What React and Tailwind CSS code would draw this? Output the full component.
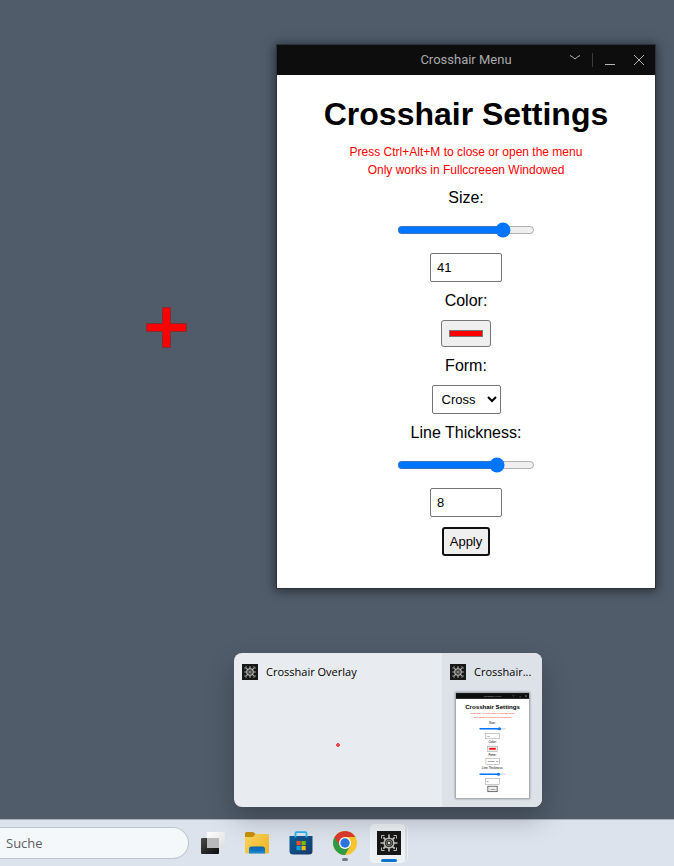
import React, { useState } from "react";

function Gear({ className }) {
  return (
    <svg viewBox="0 0 24 24" className={className} aria-hidden="true">
      <rect width="24" height="24" fill="#171717" />
      <g stroke="#bdbdb8" fill="none">
        <path d="M4.500 7.500v-3h3M16.500 4.500h3v3M19.500 16.500v3h-3M7.500 19.500h-3v-3" strokeWidth="1" />
        <path d="M12 3.500v4M12 16.500v4M3.500 12h4M16.500 12h4" strokeWidth="1.600" />
        <path d="M6.300 6.300l2.600 2.600M17.700 6.300l-2.600 2.600M6.300 17.700l2.600-2.600M17.700 17.700l-2.600-2.600" strokeWidth="1.800" />
        <circle cx="12" cy="12" r="4.800" strokeWidth="1.600" />
      </g>
      <circle cx="12" cy="12" r="3" fill="#3a3a3a" stroke="#8a8a86" strokeWidth="0.800" />
      <circle cx="12" cy="12" r="1.200" fill="#d8d8d4" />
    </svg>
  );
}

function TitleBar() {
  return (
    <header className="relative flex h-[30px] items-center justify-center bg-[#0d0d0d] font-['Roboto',sans-serif] text-[13px] text-[#a9a9a9]">
      <span>Crosshair Menu</span>
      <div className="absolute inset-y-0 right-0 flex items-center">
        <button type="button" aria-label="Collapse" className="flex h-[30px] w-[34px] items-center justify-center">
          <svg width="12" height="30" viewBox="0 0 12 30" fill="none" stroke="#b5b5b5" strokeWidth="1">
            <path d="M1 10.500Q3.500 11.500 6 14Q8.500 11.500 11 10.500" />
          </svg>
        </button>
        <span className="h-[14px] w-px bg-[#3a3a3a]" />
        <button type="button" aria-label="Minimize" className="flex h-[30px] w-[34px] items-center justify-center">
          <svg width="10" height="30" viewBox="0 0 10 30" fill="#b5b5b5">
            <rect y="19" width="10" height="1" />
          </svg>
        </button>
        <button type="button" aria-label="Close" className="flex h-[30px] w-[28px] items-center justify-start">
          <svg width="12" height="12" viewBox="0 0 12 12" stroke="#b5b5b5" strokeWidth="1" className="ml-[6px]">
            <path d="M1 1l10 10M11 1L1 11" />
          </svg>
        </button>
      </div>
    </header>
  );
}

function SettingsWindow({ settings, change }) {
  return (
    <section className="absolute right-[19px] top-[45px] w-[378px] bg-white shadow-[0_0_0_1px_#2b323b,0_1px_10px_2px_rgba(0,0,0,0.5)]">
      <TitleBar />
      <form
        className="flex flex-col items-center gap-[10px] pb-8 pt-[21px] text-center font-['Liberation_Sans',Arial,sans-serif] text-base leading-[18px] text-black"
        onSubmit={(e) => e.preventDefault()}
      >
        <h1 className="text-[32px] font-bold leading-[37px]">Crosshair Settings</h1>
        <p className="text-xs leading-[18px] text-[#ff0000]">
          Press Ctrl+Alt+M to close or open the menu
          <br />
          Only works in Fullccreeen Windowed
        </p>
        <label htmlFor="size">Size:</label>
        <input id="size" type="range" min="5" max="50" value={settings.size} onChange={change("size")} className="my-[5px] h-4 w-[138px]" />
        <input type="number" aria-label="Size value" value={settings.size} onChange={change("size")} className="h-[29px] w-[72px] rounded-[2px] border border-[#767676] bg-white p-[6px] text-[13px]" />
        <label htmlFor="color">Color:</label>
        <input id="color" type="color" value={settings.color} onChange={change("color")} className="h-[27px] w-[50px] rounded-[3px] border border-[#767676] bg-[#efefef] p-[5px]" />
        <label htmlFor="form">Form:</label>
        <select id="form" value={settings.form} onChange={change("form")} className="h-[29px] w-[69px] rounded-[2px] border border-[#767676] bg-white p-[5px] text-[13px]">
          <option>Cross</option>
        </select>
        <label htmlFor="thickness">Line Thickness:</label>
        <input id="thickness" type="range" min="2" max="10" value={settings.thickness} onChange={change("thickness")} className="my-[5px] h-4 w-[138px]" />
        <input type="number" aria-label="Line thickness value" value={settings.thickness} onChange={change("thickness")} className="h-[29px] w-[72px] rounded-[2px] border border-[#767676] bg-white p-[6px] text-[13px]" />
        <button type="submit" className="h-[29px] w-12 rounded-[3px] border-2 border-[#101010] bg-[#efefef] text-[13px]">
          Apply
        </button>
      </form>
    </section>
  );
}

function Thumbnail() {
  return (
    <svg viewBox="0 0 378 543" className="h-[105px] w-[73px] bg-white shadow-[0_0_2px_1px_rgba(0,0,0,0.35)]" fontFamily="Liberation Sans, Arial, sans-serif" textAnchor="middle" fontSize="16">
      <rect width="378" height="30" fill="#0d0d0d" />
      <text x="189" y="20" fontSize="13" fill="#a9a9a9">Crosshair Menu</text>
      <path d="M292 11l6 5 6-5M328 20h10M357 10l11 11M368 10l-11 11" fill="none" stroke="#b5b5b5" strokeWidth="2" />
      <text x="189" y="80" fontSize="32" fontWeight="bold">Crosshair Settings</text>
      <g fontSize="12" fill="#ff0000">
        <text x="189" y="111">Press Ctrl+Alt+M to close or open the menu</text>
        <text x="189" y="129">Only works in Fullccreeen Windowed</text>
      </g>
      <text x="189" y="158">Size:</text>
      <text x="189" y="261">Color:</text>
      <text x="189" y="326">Form:</text>
      <text x="189" y="393">Line Thickness:</text>
      <g fill="#ddd">
        <rect x="121" y="181" width="137" height="8" rx="4" />
        <rect x="121" y="416" width="137" height="8" rx="4" />
      </g>
      <g fill="#0075ff">
        <rect x="121" y="181" width="104" height="8" rx="4" />
        <rect x="121" y="416" width="99" height="8" rx="4" />
        <circle cx="225" cy="185" r="8" />
        <circle cx="220" cy="420" r="8" />
      </g>
      <g fill="#fff" stroke="#767676" strokeWidth="2">
        <rect x="153" y="208" width="72" height="29" />
        <rect x="164" y="275" width="50" height="27" fill="#efefef" />
        <rect x="155" y="340" width="69" height="29" />
        <rect x="153" y="443" width="72" height="29" />
        <rect x="165" y="482" width="48" height="29" fill="#efefef" stroke="#101010" strokeWidth="3" />
      </g>
      <rect x="172" y="284" width="34" height="9" fill="#ff0000" />
      <g fontSize="13">
        <text x="167" y="227">41</text>
        <text x="181" y="359">Cross</text>
        <text x="164" y="462">8</text>
        <text x="189" y="501">Apply</text>
      </g>
      <path d="M208 352l5 5 5-5" fill="none" stroke="#000" strokeWidth="2" />
    </svg>
  );
}

function Previews() {
  return (
    <section className="absolute bottom-[59px] left-[234px] flex h-[154px] w-[308px] overflow-hidden rounded-lg bg-[#e8ebef] font-['Open_Sans',sans-serif] text-[11px] leading-4 text-black shadow-[0_12px_28px_rgba(0,0,0,0.24)]">
      <div className="flex w-[208px] shrink-0 flex-col px-2 pt-[11px]">
        <div className="flex items-center gap-2">
          <Gear className="size-4" />
          <span>Crosshair Overlay</span>
        </div>
        <svg viewBox="0 0 4 4" className="mt-[63px] size-[4px] self-center" fill="#f04a50" aria-hidden="true">
          <path d="M1 0h2v1h1v2h-1v1h-2v-1h-1v-2h1z" />
        </svg>
      </div>
      <div className="flex min-w-0 flex-1 flex-col items-center bg-[#dde2e8] px-2 pt-[11px]">
        <div className="flex items-center gap-2 self-stretch">
          <Gear className="size-4 shrink-0" />
          <span className="whitespace-nowrap">Crosshair...</span>
        </div>
        <div className="mt-[13px]">
          <Thumbnail />
        </div>
      </div>
    </section>
  );
}

function TaskView() {
  return (
    <svg width="24" height="24" viewBox="0 0 24 24">
      <defs>
        <linearGradient id="tvDark" x2="1" y2="1"><stop stopColor="#484848" /><stop offset="1" stopColor="#0c0c0c" /></linearGradient>
        <linearGradient id="tvLight" x2="1" y2="1"><stop stopColor="#ffffff" /><stop offset="1" stopColor="#dcdddf" /></linearGradient>
      </defs>
      <rect x="6" y="1" width="18" height="16" rx="1" fill="url(#tvLight)" />
      <rect x="0" y="7" width="18" height="16" rx="1" fill="url(#tvDark)" />
      <rect x="6" y="7" width="12" height="10" fill="#b9b9b9" />
    </svg>
  );
}

function Folder() {
  return (
    <svg width="24" height="24" viewBox="0 0 24 24">
      <defs>
        <linearGradient id="foFront" x2="1" y2="1"><stop stopColor="#fbd765" /><stop offset="1" stopColor="#efb31d" /></linearGradient>
        <linearGradient id="foBlue" x2="0" y2="1"><stop stopColor="#0b62ad" /><stop offset="1" stopColor="#198cdc" /></linearGradient>
      </defs>
      <path d="M0 2.500Q0 1 1.500 1H8l2.500 2V8H0z" fill="#c98f08" />
      <path d="M0 6h8l2.500-3H22.500Q24 3 24 4.500V21q0 1.500-1.500 1.500h-21Q0 22.500 0 21z" fill="url(#foFront)" />
      <path d="M4 22.500V18q0-2.500 2.500-2.500h11Q20 15.500 20 18v4.500z" fill="url(#foBlue)" />
      <path d="M7 19.500h10" stroke="#0e6dbb" strokeWidth="1" />
    </svg>
  );
}

function Store() {
  return (
    <svg width="24" height="24" viewBox="0 0 24 24">
      <defs>
        <linearGradient id="stBag" x2="1" y2="1"><stop stopColor="#09609f" /><stop offset="1" stopColor="#183765" /></linearGradient>
      </defs>
      <path d="M.500 5h23v15q0 3.500-3.500 3.500H4Q.500 23.500.500 20z" fill="url(#stBag)" />
      <path d="M6.500 6.500V2.500Q6.500 1.200 7.800 1.200H16.200Q17.500 1.200 17.500 2.500V6.500" fill="none" stroke="#27b5ed" strokeWidth="1.800" />
      <rect x="7.500" y="10" width="4.200" height="4.200" fill="#f25022" />
      <rect x="12.500" y="10" width="4.200" height="4.200" fill="#7fba00" />
      <rect x="7.500" y="15" width="4.200" height="4.200" fill="#00a4ef" />
      <rect x="12.500" y="15" width="4.200" height="4.200" fill="#ffb900" />
    </svg>
  );
}

function Chrome() {
  return (
    <svg width="24" height="24" viewBox="0 0 24 24">
      <circle cx="12" cy="12" r="12" fill="#fbc52c" />
      <path d="M1.610 6A12 12 0 0 0 12 24L17.200 15 12 12z" fill="#2f9b46" />
      <path d="M1.610 6A12 12 0 0 1 22.390 6H12L6.800 15z" fill="#dc3b30" />
      <circle cx="12" cy="12" r="6" fill="#fff" />
      <circle cx="12" cy="12" r="4.700" fill="#2d75e0" />
    </svg>
  );
}

function TaskButton({ label, children }) {
  return (
    <button type="button" aria-label={label} className="relative flex h-full w-11 items-center justify-center">
      {children}
    </button>
  );
}

function Taskbar() {
  return (
    <footer className="mt-auto flex h-[47px] items-center border-t border-[#a9b1bc] bg-[#dce3ed]">
      <input
        type="search"
        aria-label="Suche"
        placeholder="Suche"
        className="h-8 w-[189px] rounded-r-full border border-l-0 border-[#bcc5d0] bg-[#f5f8fb] pl-[6px] font-['Open_Sans',sans-serif] text-[13px] placeholder:text-[#5c5f63]"
      />
      <nav aria-label="Apps" className="ml-[2px] flex h-full">
        <TaskButton label="Task View"><TaskView /></TaskButton>
        <TaskButton label="Explorer"><Folder /></TaskButton>
        <TaskButton label="Store"><Store /></TaskButton>
        <TaskButton label="Chrome">
          <Chrome />
          <span className="absolute bottom-[5px] h-[3px] w-[6px] rounded-full bg-[#727982]" />
        </TaskButton>
        <TaskButton label="Crosshair">
          <span className="absolute left-2 top-[5px] h-[37px] w-[33px] rounded-[4px] border border-[#eceff3] bg-[#d9dde3]" />
          <span className="absolute left-[3px] top-[4px] h-[39px] w-[35px] rounded-[4px] border border-[#f1f3f6] bg-[#eef1f5]" />
          <Gear className="relative size-6" />
          <span className="absolute bottom-[4px] h-[3px] w-4 rounded-full bg-[#0873d0]" />
        </TaskButton>
      </nav>
    </footer>
  );
}

export default function App() {
  const [settings, setSettings] = useState({ size: 41, color: "#ff0000", form: "Cross", thickness: 8 });
  const change = (key) => (e) => setSettings({ ...settings, [key]: e.target.value });

  return (
    <main className="relative flex min-h-screen flex-col overflow-hidden bg-[#505c6a]">
      <svg viewBox="0 0 43 43" className="absolute left-[145px] top-[306px] size-[43px]" aria-label="Crosshair">
        <path d="M17.500 1.500h8v16h16v8h-16v16h-8v-16h-16v-8h16z" fill="#ff0000" stroke="#7d2f36" strokeWidth="1" />
      </svg>
      <SettingsWindow settings={settings} change={change} />
      <Taskbar />
      <Previews />
    </main>
  );
}
